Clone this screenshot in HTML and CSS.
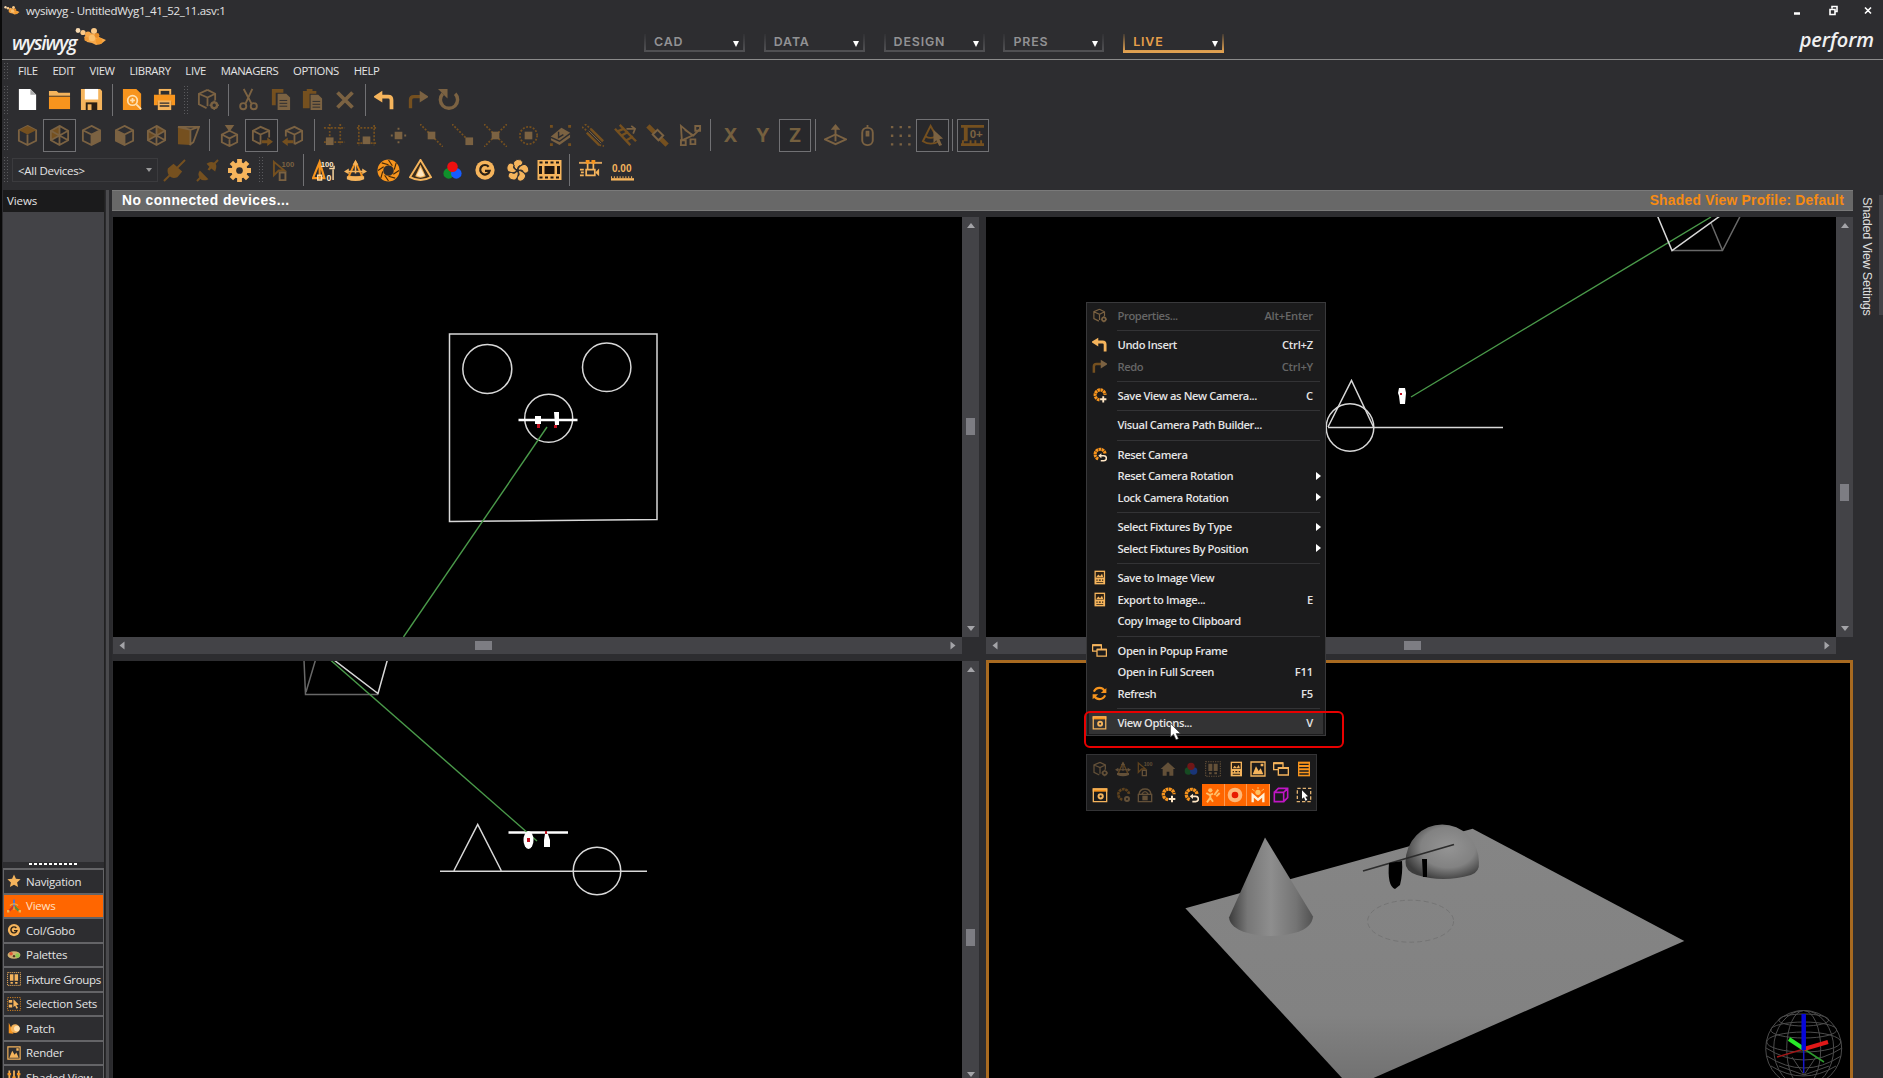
FILE: index.html
```html
<!DOCTYPE html>
<html lang="en">
<head>
<meta charset="utf-8">
<title>wysiwyg</title>
<link rel="stylesheet" href="styles.css">
</head>
<body>
<svg class="paints" aria-hidden="true">
  <defs>
    <linearGradient id="cone" x1="0" x2="1"><stop offset="0" stop-color="#3c3c3c"/><stop offset=".22" stop-color="#777"/><stop offset=".5" stop-color="#8e8e8e"/><stop offset=".8" stop-color="#747474"/><stop offset="1" stop-color="#525252"/></linearGradient>
    <radialGradient id="ball" cx=".58" cy=".42" r=".62"><stop offset="0" stop-color="#949494"/><stop offset=".6" stop-color="#828282"/><stop offset="1" stop-color="#3c3c3c"/></radialGradient>
    <linearGradient id="floor" x1="0" y1="0" x2="0" y2="1"><stop offset="0" stop-color="#858585"/><stop offset=".75" stop-color="#828282"/><stop offset="1" stop-color="#727272"/></linearGradient>
  </defs>
</svg>
<svg class="defs" aria-hidden="true">
  <symbol id="bee" viewBox="0 0 32 18"><g fill="#f6a84a"><circle cx="3" cy="2.5" r="2.4" fill="#f7d9b0"/><circle cx="8" cy="4.5" r="2.6" fill="#fbc987"/><circle cx="13" cy="6.5" r="3"/><circle cx="19" cy="3" r="3" fill="#fbc987"/><path d="M9 9l6-4 6 1 3 3 7 3-5 4-5 1-4-2-5-1z"/><circle cx="17" cy="10" r="3.2" fill="#fbbf6b"/><circle cx="22" cy="7.500" r="2.400" fill="#e88e2a"/><circle cx="24" cy="13" r="3.2" fill="#f39a2e"/><circle cx="11.500" cy="11" r="2.200" fill="#ef9a38"/></g></symbol>
  <symbol id="file" viewBox="0 0 24 24"><path fill="#fff" d="M3 1h12l6 6v16H3z"/><path fill="#aaa" d="M15 1v6h6z"/></symbol>
  <symbol id="folder" viewBox="0 0 24 24"><path class="a" d="M1 3h8l2 2h12v3H1z"/><path class="b" d="M1 9h22v13H1z"/></symbol>
  <symbol id="save" viewBox="0 0 24 24"><path class="a" d="M1 1h20l2 2v20H1z"/><path fill="#fff" d="M5 1h14v11H5z"/><path fill="#2b2014" d="M6 15h12v8H6z"/><path class="a" d="M8 17h4v6H8z"/></symbol>
  <symbol id="preview" viewBox="0 0 24 24"><path class="b" d="M2 1h14l5 5v17H2z"/><g class="n" stroke="#ffe0b0" stroke-width="1.8"><circle cx="12" cy="13" r="5"/><path d="M12 10.500v5M9.500 13h5M16 17l5 5"/></g></symbol>
  <symbol id="print" viewBox="0 0 24 24"><path class="a" d="M6 1h13v6H6z"/><path fill="#2d2d30" d="M8 3h9v4H8z"/><path class="b" d="M1 7h22v11h-4v-4H5v4H1z"/><path class="a" d="M5 13h14v10H5z"/><path fill="#2d2d30" d="M7 15h10v1.500H7zM7 18h10v1.500H7z"/></symbol>
  <symbol id="boxgear" viewBox="0 0 24 24"><path class="n l" d="M12 2l8 4v7M12 2L3 6v11l8 4M3 6l9 4 8-4M12 10v9"/><circle class="n" cx="19" cy="18" r="3" stroke="var(--a)" stroke-width="2.500"/><path class="n" stroke="var(--a)" stroke-width="1.500" d="M19 13v2M19 21v2M14 18h2M22 18h2"/></symbol>
  <symbol id="cut" viewBox="0 0 24 24"><path class="n" stroke="var(--a)" stroke-width="2" d="M7 1l8 15M16 1L9 16"/><circle class="n" cx="6.500" cy="19" r="3.200" stroke="var(--a)" stroke-width="2"/><circle class="n" cx="17.500" cy="19" r="3.200" stroke="var(--a)" stroke-width="2"/></symbol>
  <symbol id="copy" viewBox="0 0 24 24"><path class="b" d="M3 1h12v4H7v13H3z"/><path class="a" d="M9 6h9l4 4v13H9z"/><path stroke="#2d2d30" d="M11 13h8M11 16h8M11 19h8"/></symbol>
  <symbol id="paste" viewBox="0 0 24 24"><path class="b" d="M2 3h4V1h6v2h4v3H9v15H2z"/><path class="a" d="M10 7h8l4 4v12H10z"/><path stroke="#2d2d30" d="M12 14h8M12 17h8M12 20h8"/></symbol>
  <symbol id="del" viewBox="0 0 24 24"><path stroke="var(--a)" stroke-width="4.500" d="M3 3l18 18M21 3L3 21"/></symbol>
  <symbol id="undo" viewBox="0 0 24 24"><path class="n" stroke="var(--a)" stroke-width="4.500" d="M7 8h10q4 0 4 4v11"/><path class="a" d="M-1 8l11-7v14z"/></symbol>
  <symbol id="redo" viewBox="0 0 24 24"><path class="n" stroke="var(--b)" stroke-width="4" d="M3 22v-10q0-4 4-4h10"/><path class="a" d="M25 8l-11-7v14z"/></symbol>
  <symbol id="repeat" viewBox="0 0 24 24"><path class="n" stroke="var(--a)" stroke-width="3.600" d="M19 6a9 9 0 1 1-13 0"/><path class="a" d="M1 1h10v10L8 8 4 4z"/></symbol>
  <symbol id="cubetop" viewBox="0 0 24 24"><path class="n l" d="M12 2l9 4.500v11L12 22l-9-4.500v-11zM12 11v11"/><path class="b" d="M12 2l9 4.500-9 4.500-9-4.500z"/></symbol>
  <symbol id="cubewire" viewBox="0 0 24 24"><path class="b" d="M3 7l9-5v10l-9 5z"/><path class="n l" d="M12 2l9 5v10l-9 5-9-5V7zM12 2v20M3 7l18 10M21 7L3 17"/></symbol>
  <symbol id="cubeback" viewBox="0 0 24 24"><path class="b" d="M21 7l-9-5v10zM3 7l9 5-9 5z" opacity=".8"/><path class="n l" d="M12 2l9 5v10l-9 5-9-5V7zM12 2v20M3 7l18 10M21 7L3 17"/></symbol>
  <symbol id="cubeside" viewBox="0 0 24 24"><path class="n l" d="M12 2l9 4.500v11L12 22l-9-4.500v-11zM3 6.500l9 4.500 9-4.500M12 11v11"/><path class="a" d="M12 11l9-4.500v11L12 22z"/></symbol>
  <symbol id="cubeleft" viewBox="0 0 24 24"><path class="n l" d="M12 2l9 4.500v11L12 22l-9-4.500v-11zM3 6.500l9 4.500 9-4.500M12 11v11"/><path class="a" d="M12 11L3 6.500v11l9 4.500z"/></symbol>
  <symbol id="persp" viewBox="0 0 24 24"><path class="b" d="M1 3l13 3v16L1 21z"/><path class="n l" d="M1 3h22l-6 16-4 3M1 3l13 3 9-3M14 6v16"/></symbol>
  <symbol id="cubedown" viewBox="0 0 24 24"><path class="n l" d="M12 7l8 4v8l-8 4-8-4v-8zM4 11l8 4 8-4M12 15v7"/><path class="a" d="M7 1h10l-5 7z"/></symbol>
  <symbol id="cubepr" viewBox="0 0 24 24"><path class="n l" d="M20 14V7l-9-4-8 4v10l8 4M3 7l8 4 9-4M11 11v10"/><path class="b" d="M12 17h6v-3l6 4.500-6 4.500v-3h-6z"/></symbol>
  <symbol id="cubepl" viewBox="0 0 24 24"><path class="n l" d="M4 13V7l9-4 8 4v10l-8 4M4 7l9 4 8-4M13 11v10"/><path class="b" d="M12 17H6v-3l-6 4.500 6 4.500v-3h6z"/></symbol>
  <symbol id="snapa" viewBox="0 0 24 24"><path class="n d" d="M1 4h22M7 0v22M18 0v22M1 19h22"/><path class="a" d="M3 14h8v8H3z"/></symbol>
  <symbol id="snapb" viewBox="0 0 24 24"><path class="n d" d="M2 4h20M4 1v22M20 1v22M2 20h20"/><path class="a" d="M8 13h8v8H8z"/></symbol>
  <symbol id="snapc" viewBox="0 0 24 24"><path class="a" d="M8 8h8v8H8zM11 4h2v2h-2zM11 18h2v2h-2zM4 11h2v2H4zM18 11h2v2h-2z"/></symbol>
  <symbol id="snapd" viewBox="0 0 24 24"><path class="n d" d="M0 0l24 24"/><path class="a" d="M8 8h8v8H8z"/></symbol>
  <symbol id="snape" viewBox="0 0 24 24"><path class="n d" d="M0 0l18 18"/><path class="a" d="M14 14h8v8h-8z"/></symbol>
  <symbol id="snapf" viewBox="0 0 24 24"><path class="n d" d="M0 0l24 24M24 0L0 24"/><path class="a" d="M8 8h8v8H8z"/></symbol>
  <symbol id="snapg" viewBox="0 0 24 24"><circle class="n d" cx="12" cy="12" r="9" stroke-dasharray="2 2.700"/><path class="a" d="M8 8h8v8H8z"/></symbol>
  <symbol id="erase" viewBox="0 0 24 24"><path class="b" d="M1 1h3v3H1zM20 1h3v3h-3zM1 20h3v3H1zM20 20h3v3h-3z"/><path class="a" d="M2 13L13 4l9 5v5l-11 8-9-5z"/><path class="n" stroke="#2d2d30" stroke-width="1.500" d="M2 14l9 4 11-8M10 8v6l5-3"/></symbol>
  <symbol id="pencil" viewBox="0 0 24 24"><path stroke="var(--b)" stroke-width="2.600" d="M5 9l13 13M9 5l13 13"/><path stroke="var(--a)" stroke-width="1" d="M7 7l13 13"/><path class="n d" d="M0 3l5 4M3 0l6 5M18 22l5 1"/></symbol>
  <symbol id="truss" viewBox="0 0 24 24"><path stroke="var(--b)" stroke-width="2.500" d="M1 5l16 17M6 1l17 17M3 8l7-3M8 12l7-4M13 17l7-4"/><path class="n" stroke="var(--a)" stroke-width="1.800" d="M13 5h8M18 2l4 3-2 5"/></symbol>
  <symbol id="pipe" viewBox="0 0 24 24"><path stroke="var(--b)" stroke-width="5" d="M2 2l20 20"/><path fill="#2d2d30" stroke="var(--a)" stroke-width="2" d="M7 11l5-5 6 6-5 5z"/></symbol>
  <symbol id="hang" viewBox="0 0 24 24"><path class="n l" d="M2 2l12 10-11 5zM6 6l9 6L22 5"/><path class="n" stroke="var(--a)" stroke-width="2" d="M17 2h5v5h-5zM2 17h5v5H2zM12 16h5v5h-5z"/></symbol>
  <symbol id="up" viewBox="0 0 24 24"><path class="n l" d="M1 16l11-5 11 5-11 5z"/><path class="a" d="M11 18V6H7l5-6 5 6h-4v12z"/></symbol>
  <symbol id="mouse" viewBox="0 0 24 24"><rect class="n" x="6.500" y="4" width="11" height="18" rx="5" stroke="var(--a)" stroke-width="2"/><path class="n l" d="M12 1v3M11 8h2v4h-2z"/></symbol>
  <symbol id="dots" viewBox="0 0 24 24"><path class="a" d="M2 2h2.500v2.500H2zM11 2h2.500v2.500H11zM20 2h2.500v2.500H20zM2 11h2.500v2.500H2zM11 11h2.500v2.500H11zM20 11h2.500v2.500H20zM2 20h2.500v2.500H2zM11 20h2.500v2.500H11zM20 20h2.500v2.500H20z"/></symbol>
  <symbol id="conecur" viewBox="0 0 24 24"><path class="n" stroke="var(--b)" stroke-width="2" d="M10 2L2 18q8 5 17 0zM5 13q5 3 10 0"/><path class="a" d="M13 6l10 9-4 1 3 6-3 1-3-6-3 3z"/></symbol>
  <symbol id="rig" viewBox="0 0 24 24"><path class="b" d="M0 1h24v3H0zM3 4h4v14H3zM0 20h24v3H0zM1 17h2v3H1zM9 17h2v3H9zM14 17h2v3h-2zM20 17h2v3h-2z"/><text x="9" y="15" class="it" font-size="12">0+</text></symbol>
  <symbol id="plug" viewBox="0 0 24 24"><path stroke="var(--b)" stroke-width="2" d="M1 23L23 1"/><path class="b" d="M5 10l6-5 9 8-5 6q-5 2-8-1t-2-8z"/></symbol>
  <symbol id="unplug" viewBox="0 0 24 24"><path stroke="var(--b)" stroke-width="2" d="M1 23l6-6M17 7l6-6"/><path class="b" d="M4 12l9 9q-6 3-9-1t0-8zM11 5l3 3-2 3 2 1 2-2 4 3q3-7-1-9t-8 1z"/></symbol>
  <symbol id="gear" viewBox="0 0 24 24"><g stroke="var(--a)" stroke-width="5"><path d="M12 0v24M0 12h24M3.500 3.500l17 17M20.500 3.500l-17 17"/></g><circle class="a" cx="12" cy="12" r="8.500"/><circle cx="12" cy="12" r="3.500" fill="#2d2d30"/></symbol>
  <symbol id="cur100" viewBox="0 0 24 24"><path class="n" stroke="var(--b)" stroke-width="2" d="M2 3l11 9H7l-5 5z"/><path class="n" stroke="var(--a)" stroke-width="2" d="M8 14h6v8H8z"/><text x="10" y="8" class="it" font-size="8">100</text></symbol>
  <symbol id="int100" viewBox="0 0 24 24"><path class="n" stroke="var(--b)" stroke-width="2.200" d="M8 3L1 20h12zM8 5v14"/><path class="n" stroke="#ffd9a0" stroke-width="1.500" d="M6 17h4v5H6zM18 10h5V7M22 11v11"/><text x="9" y="8" class="wt" font-size="8">100</text><text x="15" y="23" class="wt" font-size="9">0</text></symbol>
  <symbol id="pan" viewBox="0 0 24 24"><path class="n" stroke="var(--b)" stroke-width="2" d="M12 3L5 18q7 3 14 0z"/><path class="a" d="M12 1l3 5H9zM0 13l5-3v6zM24 13l-5-3v6zM3 18h18v3q-9 4-18 0z"/><path stroke="var(--a)" stroke-width="1.600" d="M3 13h18M12 5v10"/></symbol>
  <symbol id="iris" viewBox="0 0 24 24"><circle class="n" cx="12" cy="12" r="8.500" stroke="var(--b)" stroke-width="6"/><path class="n" stroke="#432808" stroke-width="1.200" d="M12 1l4 6M20 4l-2 7M23 12l-6 4M19 20l-7-2M12 23l-4-6M4 20l2-7M1 12l6-4M5 4l7 2"/></symbol>
  <symbol id="beam" viewBox="0 0 24 24"><path fill="#3a2c1c" stroke="var(--a)" stroke-width="2" d="M12 1L1 19q11 6 22 0z"/><path class="a" d="M12 6L6.500 18q5.500 3 11 0z"/><path fill="#ffe6c0" d="M12 9l-4 8q4 3 8 0z"/></symbol>
  <symbol id="rgb" viewBox="0 0 24 24"><circle cx="8" cy="15" r="5.500" fill="#10902b"/><circle cx="16" cy="15" r="5.500" fill="#175cff"/><circle cx="12" cy="8" r="5.500" fill="#ee1010"/></symbol>
  <symbol id="gobo" viewBox="0 0 24 24"><circle class="a" cx="12" cy="12" r="10.500"/><path class="n" stroke="#2b2014" stroke-width="2.400" d="M16 8.500a5.200 5.200 0 1 0 1 4.500h-5"/></symbol>
  <symbol id="fan" viewBox="0 0 24 24"><g class="a" stroke="#2d2d30" stroke-width="1"><path id="blade" d="M12 12Q7 9 8 3q3-4 8-2 3 3 0 6-4-1-4 5z"/><use href="#blade" transform="rotate(72 12 12)"/><use href="#blade" transform="rotate(144 12 12)"/><use href="#blade" transform="rotate(216 12 12)"/><use href="#blade" transform="rotate(288 12 12)"/></g><circle cx="12" cy="12" r="1.800" fill="#2d2d30"/></symbol>
  <symbol id="film" viewBox="0 0 24 24"><path class="a" d="M0 2h24v20H0z"/><path fill="#1f1710" d="M7 8h10v8H7zM1.500 8h3v8h-3zM19.500 8h3v8h-3zM2 3.500h3v2H2zM7.500 3.500h3v2h-3zM13 3.500h3v2h-3zM18.500 3.500h3v2h-3zM2 18.500h3v2H2zM7.500 18.500h3v2h-3zM13 18.500h3v2h-3zM18.500 18.500h3v2h-3z"/></symbol>
  <symbol id="camrail" viewBox="0 0 24 24"><path stroke="#d9a35f" stroke-width="2" d="M0 4h24"/><path class="b" d="M7 1h4v4H7zM13 1h4v4h-4z"/><path class="n" stroke="var(--a)" stroke-width="1.800" d="M9 5v6M15 5v6M7.500 11h9v6h-9zM1 11h4M2 14h3M1 17h4"/><path class="a" d="M17 14l4-4v8z"/></symbol>
  <symbol id="zero" viewBox="0 0 24 24"><text x="1" y="14" class="it" font-size="10.500">0.00</text><path class="a" d="M0 20h24v2.500H0z"/><path stroke="var(--a)" stroke-width="2" stroke-dasharray="1 2" d="M0 19h24"/></symbol>
  <symbol id="star" viewBox="0 0 24 24"><path class="a" d="M12 1l3.300 7.300 8 .9-6 5.300 1.700 7.900-7-4-7 4 1.700-7.900-6-5.300 8-.9z"/></symbol>
  <symbol id="axes" viewBox="0 0 24 24"><path stroke="#5674c8" stroke-width="3.500" d="M12 1v12"/><path stroke="#c63a2e" stroke-width="3.500" d="M11 13l-7 7"/><path stroke="#5a8c3a" stroke-width="3.500" d="M13 13l7 7"/><path class="n" stroke="#e8b04e" stroke-width="2" d="M5 11q7-5 14 0M12 13v6"/><path fill="#f0b050" d="M0 19h4v4H0zM20 19h4v4h-4z"/></symbol>
  <symbol id="palette" viewBox="0 0 24 24"><ellipse cx="12" cy="12" rx="11" ry="6.500" fill="#cfb070"/><circle cx="7" cy="10" r="3" fill="#e05535"/><circle cx="18" cy="13" r="3.800" fill="#8cc850"/><circle cx="12" cy="14" r="2" fill="#4b3520"/></symbol>
  <symbol id="groups" viewBox="0 0 24 24"><path class="n" stroke="var(--a)" stroke-width="1.600" stroke-dasharray="2 1.500" d="M1 1h22v22H1z"/><path class="a" d="M5 4h6v11H5zM13 4h6v11h-6zM6 17h4v3H6zM14 17h4v3h-4z"/></symbol>
  <symbol id="selset" viewBox="0 0 24 24"><path class="n" stroke="var(--b)" stroke-width="1.400" stroke-dasharray="2 2" d="M1 1h22v22H1z"/><path class="a" d="M3 5h6v5H3zM3 13h6v5H3zM11 4l9 9-4 1 3 5-3 1-2-5-3 2z"/></symbol>
  <symbol id="patch" viewBox="0 0 24 24"><path class="b" d="M3 3l4 8 4 11-8-1z"/><circle cx="14" cy="13" r="7.500" class="a"/><circle cx="17" cy="13" r="5" fill="#ffe2b2"/></symbol>
  <symbol id="image" viewBox="0 0 24 24"><path class="n" stroke="var(--a)" stroke-width="2" d="M1.500 1.500h21v21h-21z"/><path class="a" d="M4 20l5-12 4 7 3-4 4 9zM16 4h4v4h-4z"/></symbol>
  <symbol id="shade" viewBox="0 0 24 24"><path stroke="var(--a)" stroke-width="3" d="M4 1v22M12 1v22M20 1v22"/><path class="b" d="M1 5h6v4H1zM9 11h6v4H9zM17 5h6v4h-6z"/></symbol>
  <symbol id="camplus" viewBox="0 0 24 24"><path class="n" stroke="var(--b)" stroke-width="5" stroke-dasharray="4 .8" d="M12 19a8 8 0 1 1 9-8"/><path stroke="#ffe6c4" stroke-width="3" d="M18 13v10M13 18h10"/></symbol>
  <symbol id="camback" viewBox="0 0 24 24"><path class="n" stroke="var(--b)" stroke-width="5" stroke-dasharray="4 .8" d="M10 19a8 8 0 1 1 11-8"/><path class="n" stroke="#ffe6c4" stroke-width="2.500" d="M14 14h5a4 4 0 0 1 0 8h-5"/><path fill="#ffe6c4" d="M10 14l5-4v8z"/></symbol>
  <symbol id="sheet" viewBox="0 0 24 24"><path class="a" d="M4 1h17v22H4z"/><path fill="#2b2014" d="M6 3h13v9H6zM7 15h2v2H7zM11 15h3v2h-3zM16 15h2v2h-2zM7 19h11v1.500H7z"/><path class="a" d="M7 11l3-4 3 3 3-4 2 5z"/></symbol>
  <symbol id="frames" viewBox="0 0 24 24"><g fill="#1b1b1c" stroke="var(--a)" stroke-width="2"><path d="M1 3h14v10H1z"/><path d="M8 10h15v11H8z"/></g><path class="a" d="M1 2h14v3H1zM8 9h15v3H8z"/></symbol>
  <symbol id="refresh" viewBox="0 0 24 24"><path class="n" stroke="var(--b)" stroke-width="3.500" d="M3 9q3-6 9-6 6 0 8 5M21 15q-3 6-9 6-6 0-8-5"/><path class="b" d="M23 3v8h-9zM1 21v-8h9z"/></symbol>
  <symbol id="win" viewBox="0 0 24 24"><path class="b" d="M1 2h22v5H1z"/><path class="n" stroke="var(--a)" stroke-width="2" d="M2 3h20v19H2z"/><circle class="n" cx="13" cy="14" r="3.200" stroke="var(--a)" stroke-width="3"/></symbol>
  <symbol id="home" viewBox="0 0 24 24"><path class="a" d="M12 2l11 10h-3v10h-6v-6h-4v6H4V12H1z"/></symbol>
  <symbol id="list" viewBox="0 0 24 24"><path class="b" d="M3 1h18v22H3z"/><path stroke="#1b1b1c" stroke-width="2" d="M5 5h14M5 10h14M5 15h14M5 19.500h14"/></symbol>
  <symbol id="camgear" viewBox="0 0 24 24"><path class="n" stroke="var(--b)" stroke-width="4" stroke-dasharray="4 1" d="M11 19a8 8 0 1 1 10-8"/><circle class="n" cx="18" cy="18" r="3" stroke="var(--a)" stroke-width="3"/></symbol>
  <symbol id="lock" viewBox="0 0 24 24"><path class="n" stroke="var(--a)" stroke-width="2" d="M2 11h20v11H2zM3 11Q4 3 12 3t9 8M7 11q5-8 10 0"/><path class="a" d="M8 13h8v7H8z"/></symbol>
  <symbol id="man" viewBox="0 0 24 24"><g class="n" stroke="#ffc06a" stroke-width="2.800"><path d="M2 9l5 3 5-2M8 10v6l-5 7M8 16l4 6M14 12l6-8M17 14l5-5"/></g><circle cx="8" cy="5" r="3.200" fill="#ffc06a"/></symbol>
  <symbol id="target" viewBox="0 0 24 24"><circle cx="12" cy="12" r="8" fill="#e81b00" stroke="#ffb878" stroke-width="6"/></symbol>
  <symbol id="emm" viewBox="0 0 24 24"><path class="n" stroke="#fff0d8" stroke-width="3.500" d="M4 23V12l8 7 8-7v11"/><circle cx="12" cy="8" r="4" fill="#ffc060"/><path stroke="#ffc060" stroke-width="1.500" d="M12 0v3M3 3l4 3M21 3l-4 3"/></symbol>
  <symbol id="pcube" viewBox="0 0 24 24"><path class="n" stroke="#c016c4" stroke-width="2.400" d="M2 8h14v14H2zM2 8l6-6h14v14l-6 6M16 8l6-6"/></symbol>
  <symbol id="marq" viewBox="0 0 24 24"><path class="n" stroke="#e0b070" stroke-width="2" stroke-dasharray="5 3" d="M2 2h20v20H2z"/><path fill="#fff" d="M9 5l9 9-4 .5 3 5-3 1-2-5-3 2z"/></symbol>
</svg>

<div class="app">
  <header class="title"><svg class="bee-s"><use href="#bee"/></svg><span>wysiwyg - UntitledWyg1_41_52_11.asv:1</span>
    <svg class="winctl" viewBox="0 0 80 12"><path stroke="#fff" stroke-width="2.500" d="M1 8.500h6"/><g class="n" stroke="#fff" stroke-width="1.600"><path d="M37 4.500h5v5h-5zM39 3.500v-2h5v5h-2M72 2.500l6 6M78 2.500l-6 6"/></g></svg>
  </header>
  <div class="brand">
    <div class="logo"><span>wysiwyg</span><svg><use href="#bee"/></svg></div>
    <nav class="tabs"><div>CAD<i></i></div><div>DATA<i></i></div><div>DESIGN<i></i></div><div>PRES<i></i></div><div class="on">LIVE<i></i></div></nav>
    <div class="edition">perform</div>
  </div>
  <nav class="menu"><b class="grip"></b><span>FILE</span><span>EDIT</span><span>VIEW</span><span>LIBRARY</span><span>LIVE</span><span>MANAGERS</span><span>OPTIONS</span><span>HELP</span></nav>

  <div class="bar t1"><b class="grip"></b>
    <a><svg><use href="#file"/></svg></a><a><svg><use href="#folder"/></svg></a><a><svg><use href="#save"/></svg></a><hr>
    <a><svg><use href="#preview"/></svg></a><a><svg><use href="#print"/></svg></a><b class="grip mid"></b>
    <a class="off"><svg><use href="#boxgear"/></svg></a><hr>
    <a class="off"><svg><use href="#cut"/></svg></a><a class="off"><svg><use href="#copy"/></svg></a><a class="off"><svg><use href="#paste"/></svg></a><a class="off"><svg class="sm"><use href="#del"/></svg></a><hr>
    <a class="lft"><svg class="sm"><use href="#undo"/></svg></a><a class="off"><svg class="sm"><use href="#redo"/></svg></a><a class="off lft"><svg><use href="#repeat"/></svg></a>
  </div>
  <div class="bar t2 off"><b class="grip"></b>
    <a><svg><use href="#cubetop"/></svg></a><a class="box"><svg><use href="#cubewire"/></svg></a><a><svg><use href="#cubeside"/></svg></a><a><svg><use href="#cubeleft"/></svg></a><a><svg><use href="#cubeback"/></svg></a><a><svg><use href="#persp"/></svg></a><hr>
    <a><svg><use href="#cubedown"/></svg></a><a class="box"><svg><use href="#cubepr"/></svg></a><a><svg><use href="#cubepl"/></svg></a><hr>
    <a><svg><use href="#snapa"/></svg></a><a><svg><use href="#snapb"/></svg></a><a><svg><use href="#snapc"/></svg></a><a><svg><use href="#snapd"/></svg></a><a><svg><use href="#snape"/></svg></a><a><svg><use href="#snapf"/></svg></a><a><svg><use href="#snapg"/></svg></a><a><svg><use href="#erase"/></svg></a><a><svg><use href="#pencil"/></svg></a><a><svg><use href="#truss"/></svg></a><a><svg><use href="#pipe"/></svg></a><a><svg><use href="#hang"/></svg></a><hr>
    <a class="xyz">X</a><a class="xyz">Y</a><a class="xyz box">Z</a><hr>
    <a><svg><use href="#up"/></svg></a><a><svg><use href="#mouse"/></svg></a><a><svg><use href="#dots"/></svg></a><a class="box"><svg><use href="#conecur"/></svg></a><hr>
    <a class="box"><svg><use href="#rig"/></svg></a>
  </div>
  <div class="bar t3"><b class="grip"></b><div class="combo">&lt;All Devices&gt;<i></i></div>
    <a class="off"><svg><use href="#plug"/></svg></a><a class="off"><svg><use href="#unplug"/></svg></a><a><svg><use href="#gear"/></svg></a><b class="grip mid"></b>
    <a class="off"><svg><use href="#cur100"/></svg></a><hr>
    <a><svg><use href="#int100"/></svg></a><a><svg><use href="#pan"/></svg></a><a><svg><use href="#iris"/></svg></a><a><svg><use href="#beam"/></svg></a><a><svg><use href="#rgb"/></svg></a><a><svg class="rd"><use href="#gobo"/></svg></a><a><svg><use href="#fan"/></svg></a><a><svg class="wide"><use href="#film"/></svg></a><hr>
    <a><svg><use href="#camrail"/></svg></a><a><svg><use href="#zero"/></svg></a>
  </div>

  <main class="work">
    <aside class="side">
      <div class="side-h">Views</div>
      <div class="side-b"></div>
      <div class="handle"></div>
      <ul>
        <li><svg><use href="#star"/></svg>Navigation</li>
        <li class="on"><svg><use href="#axes"/></svg>Views</li>
        <li><svg><use href="#gobo"/></svg>Col/Gobo</li>
        <li><svg><use href="#palette"/></svg>Palettes</li>
        <li><svg><use href="#groups"/></svg>Fixture Groups</li>
        <li><svg><use href="#selset"/></svg>Selection Sets</li>
        <li><svg><use href="#patch"/></svg>Patch</li>
        <li><svg><use href="#image"/></svg>Render</li>
        <li><svg><use href="#shade"/></svg>Shaded View</li>
      </ul>
    </aside>
    <div class="split"></div>
    <section class="center">
      <div class="status"><span>No connected devices...</span><span class="prof">Shaded View Profile: Default</span></div>
      <div class="views">
        <svg class="vp" viewBox="113 217 849 420"><g class="w"><path d="M449.500 334H657v185.500l-52 .5-103 1-52.500.500z"/><circle cx="487.300" cy="369" r="24.500"/><circle cx="606.700" cy="367.300" r="24.200"/><circle cx="548.700" cy="418.300" r="24"/></g><path stroke="#fff" stroke-width="2.500" d="M518.500 420h59"/><path fill="#fff" d="M535 416h6v8h-6zM554 412h5v13h-4z"/><path fill="#c01020" d="M537 424h3v4h-3zM554 425h3v3h-3z"/><path class="g" d="M547 427L403.500 637"/></svg>
        <div class="vs"><s></s><u class="th-a"></u><s class="dn"></s></div><div class="gap"></div>
        <svg class="vp" viewBox="986 217 850 420"><path class="q" d="M1672 250.500h50.500l17.500-34M1711 223l11.500 27.500"/><path class="g" d="M1411 397l300-180"/><g class="w"><path d="M1657.500 216l14.500 34.500 48-34.500M1328 427l23.500-46.500 22 46.500M1328 427.500h175"/><circle cx="1350" cy="427.500" r="23.800"/></g><path fill="#fff" d="M1399 388h6l1 5-1 11h-5l-1-8-1-3z"/><path fill="#c01020" d="M1400 393h2v2h-2z"/></svg>
        <div class="vs"><s></s><u class="th-b"></u><s class="dn"></s></div>

        <div class="hs"><s class="lf"></s><u class="th-c"></u><s class="rt"></s></div><div></div><div></div>
        <div class="hs"><s class="lf"></s><u class="th-d"></u><s class="rt"></s></div><div></div>

        <svg class="vp" viewBox="113 661 849 417"><path class="q" d="M304 660l1.500 34.500H378M306 692l9.500-32"/><path class="w" d="M334 660l44 33.500 9.500-34"/><g class="w"><path d="M454 870.500l23.700-46 23.500 46M440 871.300h207"/><circle cx="597" cy="871" r="23.800"/></g><path stroke="#fff" stroke-width="2.500" d="M508.500 832.500H568"/><path class="g" d="M331 660.500L537 841"/><ellipse cx="528.500" cy="840" rx="5" ry="9" fill="#fff"/><path fill="#fff" d="M545 834h3l2 6v7h-6v-7z"/><path fill="#c01020" d="M527 838h3v4h-3zM545 831h2v3h-2z"/></svg>
        <div class="vs"><s></s><u class="th-e"></u><s class="dn"></s></div><div></div>
        <div class="shaded">
          <svg class="vp" viewBox="989 663 861 415">
            <path fill="url(#floor)" d="M1185.400 908.300l287.200-79.600L1684.300 941 1373.500 1078H1342z"/>
            <path fill="url(#cone)" d="M1265 837.500l48 79q-1 11-17 16-26 7-50 0-16-5-17-15z"/>
            <path fill="url(#ball)" d="M1405.500 862a36.700 37.500 0 0 1 73.400 0q1 10-8 13-28 8-54 0-12-4-11.400-13z"/>
            <path stroke="#2c2c2c" stroke-width="1.800" d="M1363 871l91-26.500"/>
            <path fill="#000" d="M1389 863l13-2q1 12-2 24l-5 4q-8-3-6-26zM1422 859h5v18h-4z"/>
            <ellipse class="n" cx="1410.600" cy="921.200" rx="43" ry="21" stroke="#747474" stroke-dasharray="5 3"/>
            <g class="n" stroke="#4c4c4c"><circle cx="1803.700" cy="1048.500" r="38"/><ellipse cx="1803.700" cy="1048.500" rx="30" ry="38"/><ellipse cx="1803.700" cy="1048.500" rx="17" ry="38"/><ellipse cx="1803.700" cy="1020" rx="25" ry="6"/><ellipse cx="1803.700" cy="1030" rx="33" ry="8"/><ellipse cx="1803.700" cy="1042" rx="37" ry="10"/><path d="M1766 1048q38 24 76 0M1767 1056q37 24 74 0M1771 1066q32 20 65 0M1804 1075l-25-9M1804 1075l25-9M1804 1075l-12-18M1804 1075l12-18"/></g>
            <path stroke="#1818c8" stroke-width="1.500" d="M1803.700 1049v24"/><path stroke="#a01818" stroke-width="1.500" d="M1804 1049l-27 8"/><path stroke="#2c9c2c" stroke-width="1.500" d="M1804 1049l20 13"/><path stroke="#e01818" stroke-width="4" d="M1804 1049l24-7"/><path stroke="#28e828" stroke-width="4" d="M1804 1049l-15-10"/><path stroke="#0808d8" stroke-width="4.500" d="M1803.700 1050v-36"/>
          </svg>
        </div>
      </div>
    </section>
    <aside class="dock"><span>Shaded View Settings</span><i></i></aside>
  </main>

  <div class="ctx">
    <p class="dis off"><svg><use href="#boxgear"/></svg>Properties...<em>Alt+Enter</em></p><hr>
    <p><svg><use href="#undo"/></svg>Undo Insert<em>Ctrl+Z</em></p>
    <p class="dis off"><svg><use href="#redo"/></svg>Redo<em>Ctrl+Y</em></p><hr>
    <p><svg><use href="#camplus"/></svg>Save View as New Camera...<em>C</em></p><hr>
    <p><svg></svg>Visual Camera Path Builder...</p><hr>
    <p><svg><use href="#camback"/></svg>Reset Camera</p>
    <p><svg></svg>Reset Camera Rotation<i></i></p>
    <p><svg></svg>Lock Camera Rotation<i></i></p><hr>
    <p><svg></svg>Select Fixtures By Type<i></i></p>
    <p><svg></svg>Select Fixtures By Position<i></i></p><hr>
    <p><svg><use href="#sheet"/></svg>Save to Image View</p>
    <p><svg><use href="#sheet"/></svg>Export to Image...<em>E</em></p>
    <p><svg></svg>Copy Image to Clipboard</p><hr>
    <p><svg><use href="#frames"/></svg>Open in Popup Frame</p>
    <p><svg></svg>Open in Full Screen<em>F11</em></p>
    <p><svg><use href="#refresh"/></svg>Refresh<em>F5</em></p><hr>
    <p class="hover"><svg><use href="#win"/></svg>View Options...<em>V</em></p>
  </div>
  <div class="mini">
    <a class="off"><svg><use href="#boxgear"/></svg></a><a class="off"><svg><use href="#pan"/></svg></a><a class="off"><svg><use href="#cur100"/></svg></a><a class="off"><svg><use href="#home"/></svg></a><a class="off dim"><svg><use href="#rgb"/></svg></a><a class="off"><svg><use href="#groups"/></svg></a><a><svg><use href="#sheet"/></svg></a><a><svg><use href="#image"/></svg></a><a><svg><use href="#frames"/></svg></a><a><svg><use href="#list"/></svg></a>
    <a><svg><use href="#win"/></svg></a><a class="off"><svg><use href="#camgear"/></svg></a><a class="off"><svg><use href="#lock"/></svg></a><a><svg><use href="#camplus"/></svg></a><a><svg><use href="#camback"/></svg></a><a class="hot"><svg><use href="#man"/></svg></a><a class="hot"><svg><use href="#target"/></svg></a><a class="hot"><svg><use href="#emm"/></svg></a><a><svg><use href="#pcube"/></svg></a><a><svg><use href="#marq"/></svg></a>
  </div>
  <div class="mark"></div>
  <svg class="cursor" viewBox="0 0 12 18"><path fill="#fff" stroke="#333" stroke-width=".6" d="M.5.500v13.500l3-2.800 2.500 5.500 2.500-1-2.400-5.200h4.400z"/></svg>
</div>
</body>
</html>
```
FILE: styles.css
```css
:root { --a: #f5b45c; --b: #f7941d; --bg: #2d2d30; }
* { box-sizing: border-box; }
body { margin: 0; background: #000; overflow: hidden; font-family: "Open Sans", "Noto Sans", sans-serif; font-size: 12px; color: #e4e4e4; }
.paints { position: absolute; width: 0; height: 0; }
.defs { display: none; }
.a { fill: var(--a); }
.b { fill: var(--b); }
.n { fill: none; }
.l { stroke: var(--a); stroke-width: 1.9; }
.d { stroke: var(--b); stroke-width: 1.8; stroke-dasharray: 2 1.6; }
.it { fill: var(--a); font-family: "Liberation Sans", sans-serif; font-weight: 700; }
.wt { fill: #ffe9cc; font-family: "Liberation Sans", sans-serif; font-weight: 700; }
.off { --a: #7b6242; --b: #75501f; }

.app { position: relative; width: 1883px; height: 1078px; padding-left: 2px; background: var(--bg); display: flex; flex-direction: column; overflow: hidden; box-shadow: inset 2px 0 #0a0a0a; }

.title { height: 23px; display: flex; align-items: center; font-size: 11.500px; letter-spacing: -.3px; padding: 0 10px 2px 2px; }
.title .bee-s { width: 16px; height: 11px; margin-right: 6px; }
.winctl { width: 80px; height: 12px; margin-left: auto; }
.brand { height: 37px; border-bottom: 1px solid #8a8a8a; display: flex; align-items: flex-start; }
.logo { width: 642px; display: flex; padding-left: 10px; font-style: italic; font-weight: 600; font-size: 19.300px; line-height: 39px; letter-spacing: -1.1px; color: #f2f2f2; }
.logo svg { width: 32px; height: 18px; margin: 5px 0 0 -1px; }
.tabs { display: flex; gap: 18.8px; padding-top: 11px; }
.tabs div { width: 101px; height: 18px; padding: 0 4px 2px 8px; border: 2px solid #505053; border-top: 0; border-image: linear-gradient(transparent, #505053 90%) 2; display: flex; align-items: center; justify-content: space-between; font: 600 12.400px "Inter", sans-serif; letter-spacing: .85px; color: #929294; }
.tabs .on { color: #e8a04a; border: 2px solid #e0a050; border-top: 0; border-bottom-width: 3px; border-image: linear-gradient(transparent, #e0a050 90%) 2 2 3; height: 19px; }
.tabs i { border: 3.500px solid transparent; border-top: 6px solid #fff; border-bottom: 0; margin-top: 5px; }
.edition { margin: 2px 9px 0 auto; font-style: italic; font-weight: 600; font-size: 20px; line-height: 30px; letter-spacing: -.05px; color: #f0f0f0; }

.grip { width: 7px; align-self: stretch; margin: 2px 1px; background: radial-gradient(circle, #5a5a5d 35%, transparent 45%) 0 0 / 3px 3px; }
.grip.mid { width: 6px; margin: 2px 2.500px; }
.menu { height: 23px; display: flex; align-items: center; font-size: 11.300px; padding-bottom: 2px; }
.menu span { margin-right: 14.800px; letter-spacing: -.38px; }
.menu .grip { margin-right: 8px; }

.bar { display: flex; align-items: center; flex: none; }
.t1 { height: 33px; }
.t2 { height: 38px; }
.t3 { height: 32px; margin-bottom: 4px; }
.bar a { width: 32.350px; height: 33px; display: flex; align-items: center; justify-content: center; }
.bar svg { width: 23px; height: 23px; }
.bar svg.sm { width: 20px; height: 20px; }
.bar svg.rd { width: 22px; height: 22px; }
.bar svg.wide { width: 25px; height: 24px; }
.bar .lft { padding-right: 3px; }
.bar hr { width: 1px; height: 32px; margin: 0 3.500px; border: 0; background: #717174; }
.bar .box { border: 1.500px solid #717174; background: #28282b; }
.xyz { font: 700 19px "Inter", sans-serif; color: #75603f; }
.combo { width: 146px; height: 24px; margin: 0 .8px 0 1px; padding: 0 5px; border: 1px solid #3b3b3e; display: flex; align-items: center; justify-content: space-between; font-size: 11.500px; letter-spacing: -.25px; }
.combo i { border: 3px solid transparent; border-top: 4px solid #999; border-bottom: 0; }

.work { flex: 1; min-height: 0; display: flex; }
.side { width: 102px; padding-left: 1px; display: flex; flex-direction: column; flex: none; height: 888px; overflow: hidden; }
.side-h { height: 22px; line-height: 22px; padding-left: 4px; background: #1b1b1c; font-size: 11.500px; letter-spacing: -.1px; flex: none; }
.side-b { height: 650px; background: #434347; flex: none; }
.handle { height: 6px; margin: 0 0 0 26px; width: 48px; background: linear-gradient(90deg, #fff 3px, transparent 3px) 0 1px / 5px 2px repeat-x; flex: none; }
.side ul { list-style: none; margin: 0; padding: 0; flex: none; }
.side li { height: 24.500px; border: 1px solid #646467; border-width: 2px 1px 0; display: flex; align-items: center; gap: 5px; padding-left: 3px; font-size: 11.500px; white-space: nowrap; letter-spacing: -.2px; }
.side li:nth-child(5) { letter-spacing: -.35px; }
.side li svg { width: 14px; height: 14px; flex: none; }
.side li.on { background: #ff6600; color: #ffe0c4; }
.split { width: 8px; flex: none; border-left: 1px solid #222; background: linear-gradient(90deg, #2a2a2d 1px, #4a4a4d 1px, #4a4a4d 4px, #2a2a2d 4px); }

.center { width: 1741px; flex: none; }
.status { height: 21px; padding: 0 9px 0 10px; background: #686868; border: 1px solid #7a7a7a; border-width: 1px 0; display: flex; align-items: center; justify-content: space-between; font: 700 13.800px "Liberation Sans", sans-serif; letter-spacing: .45px; color: #fff; }
.prof { color: #f78b12; letter-spacing: .27px; }
.views { margin-top: 6px; padding-left: 1px; height: 862px; display: grid; grid-template: 420px 17px 424px / 849px 17px 7px 850px 17px; }
.views > * { min-width: 0; min-height: 0; }
.vp { display: block; background: #000; width: 100%; height: 100%; }
.views > .vp:nth-last-of-type(1) { height: 417px; margin-top: 7px; }
.vs, .hs { background: #434347; position: relative; display: flex; justify-content: space-between; align-items: center; }
.vs { flex-direction: column; padding: 6px 0; }
.hs { padding: 0 5px; }
s { border: 4px solid transparent; border-bottom: 5px solid #a4a4a8; border-top: 0; }
s.dn { transform: rotate(180deg); }
s.lf { transform: rotate(-90deg); }
s.rt { transform: rotate(90deg); }
u { position: absolute; background: #7d7d83; width: 9px; height: 17px; left: 4px; }
.hs u { width: 17px; height: 9px; top: 4px; }
.th-a { top: 201px; }
.th-b { top: 267px; }
.hs .th-c { left: 362px; }
.hs .th-d { left: 418px; }
.th-e { top: 268px; }
.views > .vs:nth-last-child(3) { margin-top: 7px; height: 417px; padding-bottom: 1px; }
.shaded { grid-column: 4 / 6; border: 3px solid #a86a20; border-bottom: 0; margin: 6px 0 0; height: 418px; }
.w { fill: none; stroke: #d8d8d8; stroke-width: 1.5; }
.q { fill: none; stroke: #686868; stroke-width: 1.5; }
.g { fill: none; stroke: #4a9a4a; stroke-width: 1.4; }

.dock { flex: 1; display: flex; justify-content: space-between; }
.dock span { writing-mode: vertical-rl; font: 12.600px "Liberation Sans", sans-serif; letter-spacing: -.22px; line-height: 14px; padding: 7px 0 0 7px; color: #ddd; white-space: nowrap; }
.dock i { width: 4px; height: 120px; margin-top: 5px; background: #434347; }

.ctx { position: absolute; left: 1086px; top: 302px; width: 240px; height: 434px; padding: 2px 2px 0; background: #1b1b1c; border: 1px solid #39393b; font-size: 11.200px; font-weight: 600; letter-spacing: -.4px; }
.ctx p { margin: 0; height: 21.600px; padding: 0 10px 1.400px 3px; display: flex; align-items: center; white-space: nowrap; }
.ctx svg { width: 15px; height: 15px; margin-right: 10.500px; }
.ctx em { margin-left: auto; font-style: normal; letter-spacing: -.2px; }
.ctx i { margin: 0 -8px 0 auto; border: 4px solid transparent; border-left: 5px solid #fff; border-right: 0; }
.ctx hr { height: 1px; margin: 3.400px 3px 3.400px 28px; border: 0; background: #333335; }
.dis { color: #666; }
.ctx .hover { background: #333334; }

.mini { position: absolute; left: 1086px; top: 754px; width: 231px; height: 57px; padding: 2px; background: #1b1b1c; border: 1px solid #333335; display: grid; grid-template-columns: repeat(10, 22.600px); grid-template-rows: 24px 22px; row-gap: 3px; }
.mini a { display: flex; align-items: center; justify-content: center; }
.mini svg { width: 16px; height: 16px; }
.mini .off { opacity: .75; }
.mini .dim { opacity: .4; }
.mini .hot { background: #ff6600; border-right: 1px solid #ff9a50; }

.mark { position: absolute; left: 1084px; top: 711px; width: 260px; height: 37px; border: 2px solid #e80000; border-radius: 6px; }
.cursor { position: absolute; left: 1170px; top: 723px; width: 12px; height: 18px; }
```
